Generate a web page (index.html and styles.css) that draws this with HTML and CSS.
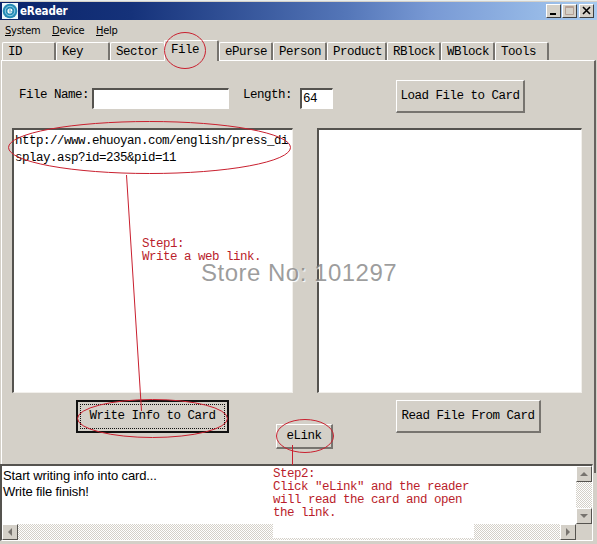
FILE: index.html
```
<!DOCTYPE html>
<html lang="en">
<head>
<meta charset="utf-8">
<title>eReader</title>
<link rel="stylesheet" href="styles.css">
</head>
<body>
<div class="window">
  <header class="titlebar">
    <svg class="logo" width="16" height="16" viewBox="0 0 16 16">
      <rect width="16" height="16" fill="#eef8fc"/>
      <circle cx="8" cy="8" r="7.3" fill="#258bb5"/>
      <circle cx="8" cy="8" r="4.8" fill="none" stroke="#8fd0e8" stroke-width="1"/>
      <path d="M6.200 8h3.600c0-1.300-.7-2-1.800-2-1.200 0-2 .9-2 2s.8 2 2 2c.8 0 1.300-.2 1.700-.6" fill="none" stroke="#fff" stroke-width="1.200"/>
    </svg>
    <h1>eReader</h1>
    <div class="controls">
      <button class="ctl"><svg width="14" height="12"><path d="M3 9h6" stroke="#000" stroke-width="2"/></svg></button>
      <button class="ctl"><svg width="14" height="12"><path d="M2.5 1.5h8v8h-8z M2 2.5h9" stroke="#b5a095" fill="none"/></svg></button>
      <button class="ctl close"><svg width="14" height="12"><path d="M3 2l7 7M10 2l-7 7" stroke="#000" stroke-width="1.6"/></svg></button>
    </div>
  </header>
  <nav class="menu"><span class="m1"><u>S</u>ystem</span><span class="m2"><u>D</u>evice</span><span><u>H</u>elp</span></nav>
  <div class="tabs">
    <span class="tab">ID</span><span class="tab">Key</span><span class="tab">Sector</span><span class="tab active">File</span><span class="tab">ePurse</span><span class="tab">Person</span><span class="tab wide">Product</span><span class="tab">RBlock</span><span class="tab">WBlock</span><span class="tab">Tools</span>
  </div>
  <main class="panel">
    <div class="fields">
      <label>File Name:</label><div class="field name"></div>
      <label class="len">Length:</label><div class="field length">64</div>
      <button class="btn load">Load File to Card</button>
    </div>
    <div class="editors">
      <div class="area">http://www.ehuoyan.com/english/press_di<wbr>splay.asp?id=235&amp;pid=11</div>
      <div class="area result"></div>
    </div>
    <div class="actions">
      <button class="btn write"><span>Write Info to Card</span></button>
      <button class="btn elink">eLink</button>
      <button class="btn read">Read File From Card</button>
    </div>
  </main>
  <section class="log">
    <div class="messages">Start writing info into card...<br>Write file finish!</div>
    <div class="vbar">
      <button class="arrow"><svg width="12" height="12"><path d="M2 8l4-4 4 4z"/></svg></button>
      <button class="arrow"><svg width="12" height="12"><path d="M2 4l4 4 4-4z"/></svg></button>
    </div>
    <div class="hbar">
      <button class="arrow"><svg width="12" height="12"><path d="M8 2L4 6l4 4z"/></svg></button>
      <button class="arrow"><svg width="12" height="12"><path d="M4 2l4 4-4 4z"/></svg></button>
    </div>
  </section>
  <div class="note step2">Step2:<br>Click "eLink" and the reader<br>will read the card and open<br>the link.</div>
  <div class="note step1">Step1:<br>Write a web link.</div>
  <svg class="marks" width="597" height="544">
    <ellipse cx="185" cy="50.500" rx="20.500" ry="18"/>
    <ellipse cx="149.500" cy="147.500" rx="141" ry="26"/>
    <path d="M126.500 175L141.500 411"/>
    <ellipse cx="152.500" cy="418.500" rx="75" ry="19"/>
    <ellipse cx="305" cy="436" rx="28.500" ry="16.500"/>
    <path d="M292.500 445v20"/>
  </svg>
  <div class="watermark">Store No: 101297</div>
</div>
</body>
</html>
```

FILE: styles.css
```
* { box-sizing: border-box; }
body { margin: 0; }
button { font: inherit; letter-spacing: inherit; color: inherit; padding: 0; margin: 0; }
.window {
  position: relative;
  width: 597px;
  height: 544px;
  overflow: hidden;
  padding-top: 2px;
  background: #d4d0c8;
  border-top: 1px solid #e8eeee;
  font: 12.5px/16px "Liberation Mono", monospace;
  letter-spacing: -.5px;
  color: #000;
}
.titlebar {
  display: flex;
  align-items: center;
  height: 18px;
  margin-top: -1px;
  padding: 0 3px 0 2px;
  background: linear-gradient(90deg, #0a246a, #15327a 22%, #5476b8 58%, #7899d4 72%, #a6caf0);
}
.titlebar h1 {
  flex: 1;
  margin: 1px 0 0 2px;
  font: bold 11.5px/17px "DejaVu Sans Condensed", sans-serif;
  letter-spacing: -.15px;
  color: #fff;
}
.controls { display: flex; }
.ctl {
  width: 15px;
  height: 14px;
  background: #d4d0c8;
  border: 1px solid;
  border-color: #fff #404040 #404040 #fff;
  margin-left: 1px;
}
.ctl.close { margin-left: 2px; }
.ctl svg { display: block; }
.menu {
  display: flex;
  height: 20px;
  padding-left: 5px;
  font: 11px/21px "DejaVu Sans Condensed", sans-serif;
  letter-spacing: -.25px;
}
.m1 { width: 47px; }
.m2 { width: 44px; }
.tabs { display: flex; align-items: flex-end; height: 20px; padding-left: 2px; }
.tab {
  width: 54px;
  height: 18px;
  padding: 0 0 0 5px;
  line-height: 18px;
  border-top: 1px solid #fff;
  border-left: 1px solid #fff;
  border-right: 2px solid #77746f;
  border-radius: 2px 2px 0 0;
}
.tab:nth-child(3) { border-right: 0; }
.tab.active {
  width: 55px;
  height: 21px;
  margin-bottom: -1px;
  background: #d4d0c8;
  line-height: 19px;
  padding-left: 6px;
}
.tab.wide { width: 60px; }
.panel {
  height: 413px;
  margin: 0 1px 0 1px;
  border: solid #fff;
  border-width: 1px 2px 0 1px;
  border-right-color: #66635f;
  padding: 19px 0 0 10px;
}
.fields { display: flex; align-items: flex-start; height: 48px; padding: 0 0 0 7px; }
.fields label { width: 73px; margin-top: 7px; }
.fields .len { margin-left: 14px; width: 57px; }
.field {
  width: 137px;
  height: 21px;
  margin-top: 8px;
  background: #fff;
  border: 1px solid #fff;
  border-top: 2px solid #55534f;
  border-left: 2px solid #55534f;
  padding: 1px;
}
.length { width: 33px; }
.btn {
  background: #d4d0c8;
  border: 1px solid #fff;
  border-right: 2px solid #77746f;
  border-bottom: 2px solid #77746f;
  white-space: nowrap;
}
.load { width: 129px; height: 33px; margin-left: 63px; }
.editors { display: flex; gap: 23px; }
.area {
  width: 281px;
  height: 265px;
  background: #fff;
  border: 1px solid #f2f0ec;
  border-top: 2px solid #55534f;
  border-left: 2px solid #55534f;
  padding: 3px 0 0 1px;
  line-height: 17px;
}
.result { width: 265px; margin-left: 1px; }
.actions { display: flex; align-items: flex-start; padding: 7px 0 0 64px; }
.write { width: 153px; height: 33px; border: 2px solid #111; padding: 2px; }
.write span { display: block; height: 25px; line-height: 23px; border: 1px dotted #111; }
.elink { width: 57px; height: 25px; margin: 24px 0 0 47px; }
.read { width: 145px; height: 33px; margin-left: 63px; }
.log {
  position: relative;
  display: grid;
  grid-template-columns: 1fr 16px;
  grid-template-rows: 58px 16px;
  width: 593px;
  height: 77px;
  margin-top: -9px;
  background: #d4d0c8;
  border: 1px solid #fff;
  border-top: 2px solid #55534f;
  border-left: 2px solid #55534f;
}
.messages {
  background: #fff;
  padding: 2px 0 0 1px;
  font: 13px/16px "Liberation Sans", sans-serif;
  letter-spacing: -.12px;
}
.vbar, .hbar {
  display: flex;
  justify-content: space-between;
  background: repeating-conic-gradient(#fff 0 25%, #d4d0c8 0 50%) 0 0 / 2px 2px;
}
.vbar { flex-direction: column; }
.arrow {
  width: 16px;
  height: 16px;
  background: #d4d0c8;
  border: 1px solid;
  border-color: #fff #55534f #55534f #fff;
}
.arrow svg { display: block; margin: 1px; fill: #77736e; }
.note {
  position: absolute;
  line-height: 13px;
  color: #ba1d2b;
  white-space: nowrap;
}
.step1 { left: 142px; top: 237px; }
.step2 { left: 273px; top: 466px; width: 201px; height: 71px; background: #fff; padding-top: 1px; }
.marks { position: absolute; left: 0; top: -1px; fill: none; stroke: #c9202f; stroke-width: 1; }
.watermark {
  position: absolute;
  left: 201px;
  top: 258px;
  font: 24px/28px "Liberation Sans", sans-serif;
  letter-spacing: .5px;
  color: rgba(125, 125, 125, .75);
  text-shadow: 1px 1px 1px #fff;
  white-space: nowrap;
}
```
